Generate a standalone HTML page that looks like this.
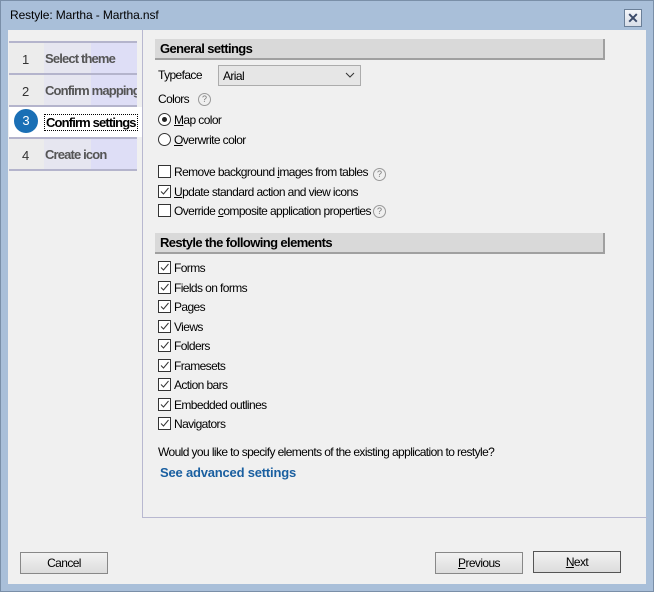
<!DOCTYPE html><html><head><style>
body{margin:0;width:654px;height:592px;overflow:hidden;font-family:"Liberation Sans",sans-serif;font-size:12px;color:#000;letter-spacing:-0.6px;white-space:nowrap}
.a{position:absolute}
#win{left:0;top:0;width:652px;height:590px;background:#a9bfd9;border:1px solid #7a8fa8}
#title{left:10px;top:8px;font-size:12px;letter-spacing:-0.1px}
#client{left:8px;top:30px;width:638px;height:554px;background:#f0f0f0}
.step{left:9px;width:128px;height:30px;border-bottom:2px solid #b4b4cc;background:linear-gradient(90deg,#ececec 0 35px,#e6e6f0 35px 82px,#dedef6 82px);overflow:hidden}
.step .n{position:absolute;left:13px;top:9px;font-size:13px;color:#333;letter-spacing:0}
.step .t{position:absolute;left:36px;top:8px;font-size:13px;font-weight:bold;color:#555;letter-spacing:-0.85px}
.hdr{left:155px;width:448px;height:19px;background:#d9d9d9;border-right:2px solid #a0a0a0;border-bottom:2px solid #a0a0a0;font-weight:bold;font-size:13px;letter-spacing:-0.6px}
.hdr span{position:absolute;left:5px;top:2px}
.cb{width:11px;height:11px;border:1px solid #333;background:#fff}
.q{width:11px;height:11px;border:1px solid #999;border-radius:50%;font-size:9px;color:#777;text-align:center;line-height:11px;letter-spacing:0}
.btn{height:20px;border:1px solid #888;background:linear-gradient(#f2f2f2,#dcdcdc);text-align:center;line-height:20px}
.rad{width:11px;height:11px;border:1px solid #333;border-radius:50%;background:#fff}
</style></head><body>
<div id="win" class="a"></div>
<div id="title" class="a">Restyle: Martha - Martha.nsf</div>
<div class="a" style="left:624px;top:9px;width:16px;height:16px;border:1px solid #6a7f98;background:linear-gradient(#f4f6fa,#d8dee8);text-align:center;line-height:16px;font-weight:bold;color:#3a4a6a;font-size:14px;letter-spacing:0">✕</div>
<div id="client" class="a"></div>
<div class="a" style="left:142px;top:30px;width:504px;height:487px;border-left:1px solid #b8b8d0;border-bottom:1px solid #b8b8d0"></div>
<div class="a" style="left:9px;top:41px;width:128px;border-top:2px solid #b4b4cc"></div>
<div class="step a" style="top:43px"><span class="n">1</span><span class="t">Select theme</span></div>
<div class="step a" style="top:75px"><span class="n">2</span><span class="t">Confirm mapping</span></div>
<div class="a" style="left:9px;top:107px;width:133px;height:30px;background:#fff"></div>
<div class="a" style="left:14px;top:109px;width:24px;height:24px;border-radius:50%;background:#1a6fb5;color:#fff;text-align:center;line-height:24px;font-size:13px;letter-spacing:0">3</div>
<div class="a" style="left:44px;top:114px;font-weight:bold;font-size:13px;border:1px dotted #000;padding:0 1px;letter-spacing:-0.85px">Confirm settings</div>
<div class="a" style="left:9px;top:137px;width:128px;border-top:2px solid #b4b4cc"></div>
<div class="step a" style="top:139px"><span class="n">4</span><span class="t">Create icon</span></div>

<div class="hdr a" style="top:39px"><span>General settings</span></div>
<div class="a" style="left:158px;top:68px">Typeface</div>
<div class="a" style="left:218px;top:65px;width:141px;height:19px;border:1px solid #acacac;background:#e6e6e6"><span style="position:absolute;left:4px;top:3px">Arial</span><svg style="position:absolute;right:5px;top:6px" width="10" height="7"><path d="M1 1l4 4 4-4" stroke="#333" fill="none"/></svg></div>
<div class="a" style="left:158px;top:92px">Colors</div>
<div class="q a" style="left:198px;top:93px">?</div>
<div class="rad a" style="left:158px;top:113px"><div style="position:absolute;left:3px;top:3px;width:5px;height:5px;border-radius:50%;background:#222"></div></div>
<div class="a" style="left:174px;top:113px"><u>M</u>ap color</div>
<div class="rad a" style="left:158px;top:133px"></div>
<div class="a" style="left:174px;top:133px"><u>O</u>verwrite color</div>

<div class="cb a" style="left:158px;top:165px"></div><div class="a" style="left:174px;top:165px">Remove background <u>i</u>mages from tables</div><div class="q a" style="left:373px;top:168px">?</div>
<div class="cb a" style="left:158px;top:185px"><svg width="11" height="11" style="position:absolute"><path d="M2 5.5l2.5 2.5 5-6" stroke="#333" fill="none"/></svg></div><div class="a" style="left:174px;top:185px"><u>U</u>pdate standard action and view icons</div>
<div class="cb a" style="left:158px;top:204px"></div><div class="a" style="left:174px;top:204px">Override <u>c</u>omposite application properties</div><div class="q a" style="left:373px;top:205px">?</div>

<div class="hdr a" style="top:233px"><span>Restyle the following elements</span></div>
<div id="list"></div>
<div class="a" style="left:158px;top:445px">Would you like to specify elements of the existing application to restyle?</div>
<div class="a" style="left:160px;top:465px;font-weight:bold;font-size:13px;color:#1a5fa0;letter-spacing:-0.2px">See advanced settings</div>

<div class="btn a" style="left:20px;top:552px;width:86px">Cancel</div>
<div class="btn a" style="left:435px;top:552px;width:86px"><u>P</u>revious</div>
<div class="btn a" style="left:533px;top:551px;width:86px;border:1px solid #555"><u>N</u>ext</div>
<script>
var items=["Forms","Fields on forms","Pages","Views","Folders","Framesets","Action bars","Embedded outlines","Navigators"],h="";
items.forEach(function(t,i){var y=261+i*19.5;h+='<div class="cb a" style="left:158px;top:'+y+'px"><svg width="11" height="11" style="position:absolute"><path d="M2 5.5l2.5 2.5 5-6" stroke="#333" fill="none"/></svg></div><div class="a" style="left:174px;top:'+y+'px">'+t+'</div>';});
document.getElementById("list").innerHTML=h;
</script>
</body></html>
